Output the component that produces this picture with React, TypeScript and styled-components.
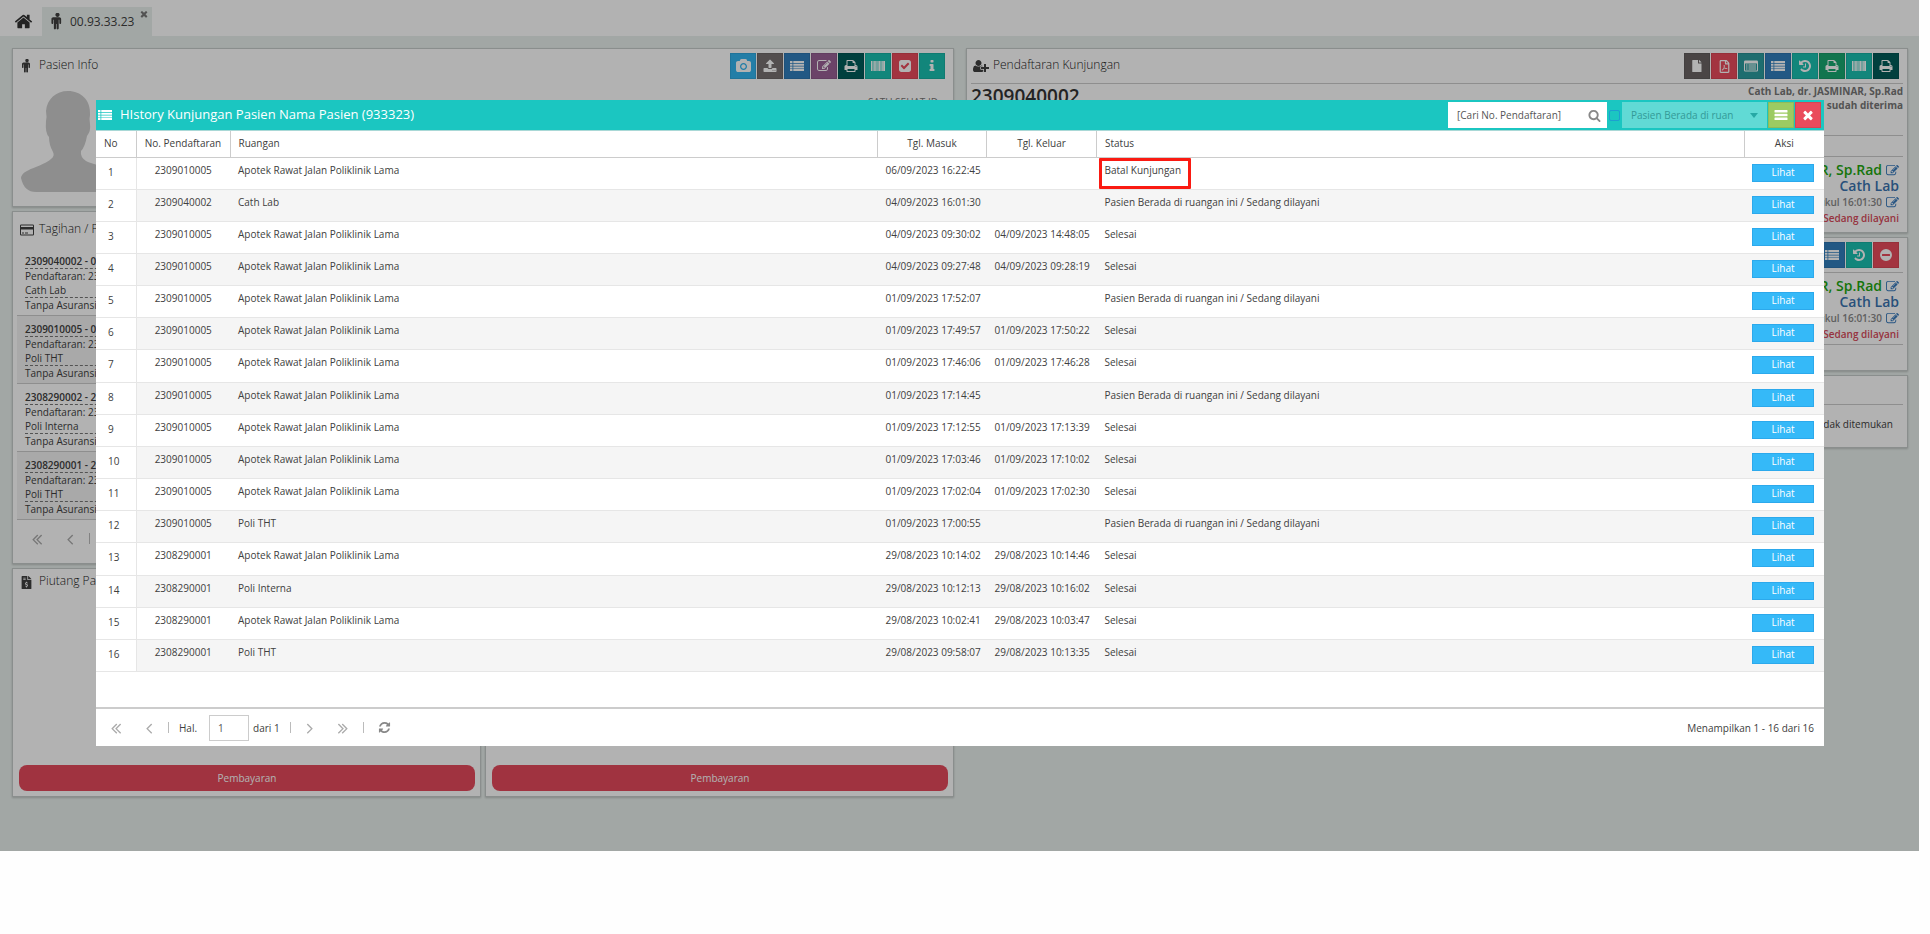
import React from "react";
import styled, { createGlobalStyle } from "styled-components";
import { FaFileInvoiceDollar, FaRegFilePdf } from "react-icons/fa";

const GlobalStyle = createGlobalStyle`
  * { box-sizing: border-box; }
  body { margin: 0; padding-right: 11px; background: #fefefe; }
  body, button, input, select { font-family: "Open Sans", "Noto Sans", sans-serif; }
  h1, h2, h3, p, ul { margin: 0; padding: 0; }
`;

/* ---------- icons ---------- */

const glyphs = {
  home: [1792, "M1472 992v480q0 26-19 45t-45 19h-384v-384h-256v384h-384q-26 0-45-19t-19-45v-480q0-1 .5-3t.5-3l575-474 575 474q1 2 1 6zm223-69l-62 74q-8 9-21 11h-3q-13 0-21-7l-692-577-692 577q-12 8-24 7-13-2-21-11l-62-74q-8-10-7-23.5t11-21.5l719-599q32-26 76-26t76 26l244 204v-195q0-14 9-23t23-9h192q14 0 23 9t9 23v408l219 182q10 8 11 21.5t-7 23.5z"],
  male: [1792, "M1280 640v416q0 40-28 68t-68 28-68-28-28-68v-352h-64v912q0 46-33 79t-79 33-79-33-33-79v-464h-64v464q0 46-33 79t-79 33-79-33-33-79v-912h-64v352q0 40-28 68t-68 28-68-28-28-68v-416q0-80 56-136t136-56h640q80 0 136 56t56 136zm-160-448q0 93-65.5 158.5t-158.5 65.5-158.5-65.5-65.5-158.5 65.5-158.5 158.5-65.5 158.5 65.5 65.5 158.5z"],
  close: [1792, "M1490 1322q0 40-28 68l-136 136q-28 28-68 28t-68-28l-294-294-294 294q-28 28-68 28t-68-28l-136-136q-28-28-28-68t28-68l294-294-294-294q-28-28-28-68t28-68l136-136q28-28 68-28t68 28l294 294 294-294q28-28 68-28t68 28l136 136q28 28 28 68t-28 68l-294 294 294 294q28 28 28 68z"],
  camera: [1920, "M960 672q119 0 203.5 84.5t84.5 203.5-84.5 203.5-203.5 84.5-203.5-84.5-84.5-203.5 84.5-203.5 203.5-84.5zm704-416q106 0 181 75t75 181v896q0 106-75 181t-181 75h-1408q-106 0-181-75t-75-181v-896q0-106 75-181t181-75h224l51-136q19-49 69.5-84.5t103.5-35.5h512q53 0 103.5 35.5t69.5 84.5l51 136h224zm-704 1152q185 0 316.5-131.5t131.5-316.5-131.5-316.5-316.5-131.5-316.5 131.5-131.5 316.5 131.5 316.5 316.5 131.5z"],
  upload: [1792, "M1344 1472q0-26-19-45t-45-19-45 19-19 45 19 45 45 19 45-19 19-45zm256 0q0-26-19-45t-45-19-45 19-19 45 19 45 45 19 45-19 19-45zm128-224v320q0 40-28 68t-68 28h-1472q-40 0-68-28t-28-68v-320q0-40 28-68t68-28h427q21 56 70.5 92t110.5 36h256q61 0 110.5-36t70.5-92h427q40 0 68 28t28 68zm-325-648q-17 40-59 40h-256v448q0 26-19 45t-45 19h-256q-26 0-45-19t-19-45v-448h-256q-42 0-59-40-17-39 14-69l448-448q18-19 45-19t45 19l448 448q31 30 14 69z"],
  edit: [1792, "M888 1184l116-116-152-152-116 116v56h96v96h56zm440-720q-16-16-33 1l-350 350q-17 17-1 33t33-1l350-350q17-17 1-33zm80 594v190q0 119-84.5 203.5t-203.5 84.5h-832q-119 0-203.5-84.5t-84.5-203.5v-832q0-119 84.5-203.5t203.5-84.5h832q63 0 117 25 15 7 18 23 3 17-9 29l-49 49q-14 14-32 8-23-6-45-6h-832q-66 0-113 47t-47 113v832q0 66 47 113t113 47h832q66 0 113-47t47-113v-126q0-13 9-22l64-64q15-15 35-7t20 29zm-96-738l288 288-672 672h-288v-288zm444 132l-92 92-288-288 92-92q28-28 68-28t68 28l152 152q28 28 28 68t-28 68z"],
  print: [1792, "M448 1536h896v-256h-896v256zm0-640h896v-384h-160q-40 0-68-28t-28-68v-160h-640v640zm1152 64q0-26-19-45t-45-19-45 19-19 45 19 45 45 19 45-19 19-45zm128 0v416q0 13-9.5 22.5t-22.5 9.5h-224v160q0 40-28 68t-68 28h-960q-40 0-68-28t-28-68v-160h-224q-13 0-22.5-9.5t-9.5-22.5v-416q0-79 56.5-135.5t135.5-56.5h64v-544q0-40 28-68t68-28h672q40 0 88 20t76 48l152 152q28 28 48 76t20 88v256h64q79 0 135.5 56.5t56.5 135.5z"],
  check: [1792, "M813 1299l614-614q19-19 19-45t-19-45l-102-102q-19-19-45-19t-45 19l-467 467-211-211q-19-19-45-19t-45 19l-102 102q-19 19-19 45t19 45l358 358q19 19 45 19t45-19zm851-883v960q0 119-84.5 203.5t-203.5 84.5h-960q-119 0-203.5-84.5t-84.5-203.5v-960q0-119 84.5-203.5t203.5-84.5h960q119 0 203.5 84.5t84.5 203.5z"],
  info: [1792, "M1216 1344v128q0 26-19 45t-45 19h-512q-26 0-45-19t-19-45v-128q0-26 19-45t45-19h64v-384h-64q-26 0-45-19t-19-45v-128q0-26 19-45t45-19h384q26 0 45 19t19 45v576h64q26 0 45 19t19 45zm-128-1152v192q0 26-19 45t-45 19h-256q-26 0-45-19t-19-45v-192q0-26 19-45t45-19h256q26 0 45 19t19 45z"],
  userPlus: [2048, "M704 896q-159 0-271.5-112.5t-112.5-271.5 112.5-271.5 271.5-112.5 271.5 112.5 112.5 271.5-112.5 271.5-271.5 112.5zm960 128h352q13 0 22.5 9.5t9.5 22.5v192q0 13-9.5 22.5t-22.5 9.5h-352v352q0 13-9.5 22.5t-22.5 9.5h-192q-13 0-22.5-9.5t-9.5-22.5v-352h-352q-13 0-22.5-9.5t-9.5-22.5v-192q0-13 9.5-22.5t22.5-9.5h352v-352q0-13 9.5-22.5t22.5-9.5h192q13 0 22.5 9.5t9.5 22.5v352zm-736 224q0 52 38 90t90 38h256v238q-68 50-171 50h-874q-121 0-194-69t-73-190q0-53 3.5-103.5t14-109 26.5-108.5 43-97.5 62-81 85.5-53.5 111.5-20q19 0 39 17 79 61 154.5 91.5t164.5 30.5 164.5-30.5 154.5-91.5q20-17 39-17 132 0 217 96h-223q-52 0-90 38t-38 90v192z"],
  history: [1792, "M1664 896q0 156-61 298t-164 245-245 164-298 61q-172 0-327-72.5t-264-204.5q-7-10-6.5-22.5t8.5-20.5l137-138q10-9 25-9 16 2 23 12 73 95 179 147t225 52q104 0 198.5-40.5t163.5-109.5 109.5-163.5 40.5-198.5-40.5-198.5-109.5-163.5-163.5-109.5-198.5-40.5q-98 0-188 35.5t-160 101.5l137 138q31 30 14 69-17 40-59 40h-448q-26 0-45-19t-19-45v-448q0-42 40-59 39-17 69 14l130 129q107-101 244.5-156.5t284.5-55.5q156 0 298 61t245 164 164 245 61 298zm-640-288v448q0 14-9 23t-23 9h-320q-14 0-23-9t-9-23v-64q0-14 9-23t23-9h224v-352q0-14 9-23t23-9h64q14 0 23 9t9 23z"],
  search: [1792, "M1216 832q0-185-131.5-316.5t-316.5-131.5-316.5 131.5-131.5 316.5 131.5 316.5 316.5 131.5 316.5-131.5 131.5-316.5zm512 832q0 52-38 90t-90 38q-54 0-90-38l-343-342q-179 124-399 124-143 0-273.5-55.5t-225-150-150-225-55.5-273.5 55.5-273.5 150-225 225-150 273.5-55.5 273.5 55.5 225 150 150 225 55.5 273.5q0 220-124 399l343 343q37 37 37 90z"],
  refresh: [1792, "M1639 1056q0 5-1 7-64 268-268 434.5t-478 166.5q-146 0-282.5-55t-243.5-157l-129 129q-19 19-45 19t-45-19-19-45v-448q0-26 19-45t45-19h448q26 0 45 19t19 45-19 45l-137 137q71 66 161 102t187 36q134 0 250-65t186-179q11-17 53-117 8-23 30-23h192q13 0 22.5 9.5t9.5 22.5zm25-800v448q0 26-19 45t-45 19h-448q-26 0-45-19t-19-45 19-45l138-138q-148-137-349-137-134 0-250 65t-186 179q-11 17-53 117-8 23-30 23h-199q-13 0-22.5-9.5t-9.5-22.5v-7q65-268 270-434.5t480-166.5q146 0 284 55.5t245 156.5l130-129q19-19 45-19t45 19 19 45z"],
  first: [1792, "M1011 1376q0 13-10 23l-50 50q-10 10-23 10t-23-10l-466-466q-10-10-10-23t10-23l466-466q10-10 23-10t23 10l50 50q10 10 10 23t-10 23l-393 393 393 393q10 10 10 23zm384 0q0 13-10 23l-50 50q-10 10-23 10t-23-10l-466-466q-10-10-10-23t10-23l466-466q10-10 23-10t23 10l50 50q10 10 10 23t-10 23l-393 393 393 393q10 10 10 23z"],
  prev: [1792, "M1203 544q0 13-10 23l-393 393 393 393q10 10 10 23t-10 23l-50 50q-10 10-23 10t-23-10l-466-466q-10-10-10-23t10-23l466-466q10-10 23-10t23 10l50 50q10 10 10 23z"],
  file: [1792, "M1024 128v416q0 32 32 32h416v1024q0 64-64 64H352q-64 0-64-64V192q0-64 64-64zM1152 128q32 8 56 32l232 232q24 24 32 56h-320z"],
  list: [1792, "M0 256h320v256H0zM420 256h1372v256H420zM0 600h320v256H0zM420 600h1372v256H420zM0 944h320v256H0zM420 944h1372v256H420zM0 1288h320v256H0zM420 1288h1372v256H420z"],
  bars: [1792, "M128 256h1536q64 0 64 64v192q0 64-64 64H128q-64 0-64-64V320q0-64 64-64zM128 736h1536q64 0 64 64v192q0 64-64 64H128q-64 0-64-64V800q0-64 64-64zM128 1216h1536q64 0 64 64v192q0 64-64 64H128q-64 0-64-64v-192q0-64 64-64z"],
  barcode: [1792, "M0 256h140v1280H0zM200 256h100v1280h-100zM350 256h140v1280H350zM540 256h100v1280h-100zM690 256h140v1280H690zM880 256h100v1280h-100zM1030 256h140v1280h-140zM1220 256h100v1280h-100zM1370 256h140v1280h-140zM1560 256h232v1280h-232z"],
  minus: [1792, "M896 128a768 768 0 1 0 0 1536 768 768 0 1 0 0-1536zM448 768h896q64 0 64 64v128q0 64-64 64H448q-64 0-64-64V832q0-64 64-64z"],
  form: [1792, "M160 192h1472q160 0 160 160v1088q0 160-160 160H160q-160 0-160-160V352q0-160 160-160zM128 576v864q0 32 32 32h1472q32 0 32-32V576zM256 704h192v128H256zM576 704h960v128H576zM256 960h192v128H256zM576 960h960v128H576zM256 1216h192v128H256zM576 1216h960v128H576z"],
  card: [1792, "M160 192h1472q160 0 160 160v1088q0 160-160 160H160q-160 0-160-160V352q0-160 160-160zM128 352v160h1536V352q0-32-32-32H160q-32 0-32 32zM128 832v608q0 32 32 32h1472q32 0 32-32V832zM256 1216h256v128H256zM640 1216h384v128H640z"],
} as const;

type GlyphName = keyof typeof glyphs;

const Svg = styled.svg<{ $flip?: boolean }>`
  display: block;
  flex: none;
  fill: currentColor;
  transform: ${(p) => (p.$flip ? "scaleX(-1)" : "none")};
`;

function Glyph({ name, size = 14, flip }: { name: GlyphName; size?: number; flip?: boolean }) {
  const [w, d] = glyphs[name];
  return (
    <Svg height={size} width={Math.round((size * w) / 1792)} viewBox={`0 0 ${w} 1792`} $flip={flip} aria-hidden="true">
      <path d={d} fillRule="evenodd" />
    </Svg>
  );
}

/* ---------- page behind the dialog ---------- */

const Page = styled.div`
  position: relative;
  min-height: 851px;
  background: #e9f0ed;
  color: #404040;
  font-size: 10px;
  line-height: 14px;
`;

const TabBar = styled.nav`
  display: flex;
  align-items: flex-end;
  height: 36px;
  padding-left: 14px;
  background: #fff;
`;

const HomeLink = styled.a`
  display: flex;
  width: 28px;
  height: 30px;
  align-items: center;
  color: #333;
`;

const PatientTab = styled.div`
  display: flex;
  align-items: center;
  gap: 4px;
  width: 110px;
  height: 29px;
  padding-left: 7px;
  background: #e9f0ed;
  font-size: 12px;
`;

const TabClose = styled.button`
  align-self: flex-start;
  margin: 2px 3px 0 auto;
  padding: 0;
  border: 0;
  background: none;
  color: #777;
`;

const Columns = styled.main`
  display: grid;
  grid-template-columns: 1fr 1fr;
  gap: 12px;
  align-items: start;
  padding: 12px 11px 0 12px;
`;

const Column = styled.div`
  display: flex;
  flex-direction: column;
  gap: 4px;
`;

const SplitRow = styled.div`
  display: grid;
  grid-template-columns: 1fr 1fr;
  gap: 4px;
`;

const Panel = styled.section<{ $height: number }>`
  display: flex;
  flex-direction: column;
  min-height: ${(p) => p.$height}px;
  padding: 0 4px;
  background: #fff;
  border: 1px solid #c6cccb;
  box-shadow: 0 1px 2px rgba(0, 0, 0, 0.2);
`;

const PanelHeader = styled.header<{ $line?: boolean; $height?: number }>`
  display: flex;
  flex: none;
  align-items: center;
  gap: 1px;
  height: ${(p) => p.$height ?? 35}px;
  padding-right: 4px;
  border-bottom: 1px solid ${(p) => (p.$line ? "#ccc" : "transparent")};
`;

const HeaderIcon = styled.span`
  display: flex;
  width: 19px;
  justify-content: center;
  margin-right: 2px;
`;

const PanelTitle = styled.h2`
  flex: 1;
  padding-bottom: 2px;
  color: #222;
  font-size: 12px;
  line-height: 16px;
  font-weight: 300;
`;

const ToolButton = styled.button<{ $color: string }>`
  display: flex;
  align-items: center;
  justify-content: center;
  width: 26px;
  height: 26px;
  padding: 0;
  border: 1px solid rgba(0, 0, 0, 0.08);
  background: ${(p) => p.$color};
  color: #fff;
`;

const PatientBody = styled.div`
  display: flex;
  justify-content: space-between;
  padding: 7px 11px 0 3px;
`;

const SatuSehat = styled.p`
  padding-top: 4px;
  color: #777;
`;

const BillList = styled.ul`
  list-style: none;
`;

const Bill = styled.li`
  padding: 7px 8px 3px;
  border-bottom: 1px solid #ccc;
  line-height: 14px;

  &:nth-child(even) {
    background: #f2f2f2;
  }
`;

const BillHead = styled.h3`
  border-bottom: 1px dashed #777;
  font-size: 10px;
  line-height: 13px;
  font-weight: 600;
`;

const BillRoom = styled.p`
  border-bottom: 1px dashed #777;
`;

const PayButton = styled.button`
  height: 26px;
  margin: auto 1px 5px 2px;
  border: 0;
  border-radius: 8px;
  background: #e54a5c;
  color: #fff;
  font-size: 10px;
`;

const Registration = styled.div`
  display: flex;
  justify-content: space-between;
  height: 52px;
  border-bottom: 1px solid #ccc;
  color: #777;
  font-weight: 700;
  text-align: right;
`;

const RegNumber = styled.h3`
  font-size: 19px;
  line-height: 24px;
  font-weight: 600;
  color: #333;
`;

const Spacer = styled.div`
  height: 21px;
  border-bottom: 1px solid #ccc;
`;

const Visit = styled.div<{ $line?: boolean }>`
  display: flex;
  flex-direction: column;
  align-items: flex-end;
  height: 72px;
  padding: 5px 4px 0 0;
  border-bottom: ${(p) => (p.$line ? "1px solid #ccc" : "0")};
`;

const VisitLine = styled.p<{ $color: string; $big?: boolean }>`
  display: flex;
  align-items: center;
  gap: 4px;
  color: ${(p) => p.$color};
  font-size: ${(p) => (p.$big ? 14 : 10)}px;
  line-height: 16px;
  font-weight: 600;
`;

const EditLink = styled.a`
  color: #3a7bbd;
`;

const Empty = styled.p`
  padding: 12px 10px;
  text-align: right;
`;

const Mask = styled.div`
  position: absolute;
  inset: 0;
  background: rgba(0, 0, 0, 0.3);
`;

/* ---------- dialog ---------- */

const Dialog = styled.section`
  position: absolute;
  top: 100px;
  left: 96px;
  right: 95px;
  display: flex;
  flex-direction: column;
  background: #fff;
`;

const TitleBar = styled.header`
  display: flex;
  align-items: center;
  gap: 1px;
  height: 31px;
  padding: 0 3px 0 2px;
  border-bottom: 1px solid #a9d8d6;
  background: #1bc6c1;
  color: #fff;
`;

const DialogTitle = styled.h1`
  flex: 1;
  padding: 0 0 2px 7px;
  font-size: 13px;
  line-height: 20px;
  font-weight: 500;
`;

const SearchBox = styled.label`
  display: flex;
  align-items: center;
  width: 159px;
  height: 26px;
  padding: 0 6px 0 9px;
  background: #fff;
  color: #888;
`;

const SearchInput = styled.input`
  flex: 1;
  min-width: 0;
  padding: 0;
  border: 0;
  outline: 0;
  background: none;
  font-size: 10px;

  &::placeholder {
    color: #555;
  }
`;

const FilterCheck = styled.input`
  appearance: none;
  width: 11px;
  height: 11px;
  margin: 0 1px;
  border: 1px solid #1d9fd0;
  border-radius: 2px;
`;

const FilterBox = styled.div`
  display: flex;
  align-items: center;
  width: 145px;
  height: 26px;
  padding-right: 9px;
  background: #61dad5;
  color: #27a8a5;
`;

const FilterSelect = styled.select`
  appearance: none;
  flex: 1;
  min-width: 0;
  padding: 0 14px 0 9px;
  border: 0;
  background: none;
  color: #1f7f7d;
  font-size: 10px;
`;

const GridArea = styled.div`
  min-height: 578px;
  border-bottom: 2px solid #ccc;
`;

const Grid = styled.table`
  width: 100%;
  height: 541px;
  table-layout: fixed;
  border-collapse: collapse;
`;

const Col = styled.col<{ $width?: number }>`
  width: ${(p) => (p.$width ? `${p.$width}px` : "auto")};
`;

const Th = styled.th<{ $align?: string }>`
  height: 26px;
  padding: 0 8px 2px;
  border-bottom: 1px solid #ccc;
  border-right: 1px solid #ccc;
  font-weight: 400;
  text-align: ${(p) => p.$align ?? "left"};

  &:last-child {
    border-right: 0;
  }
`;

const Row = styled.tr`
  &:nth-child(even) > td:not(:first-child) {
    background: #f5f5f5;
  }
`;

const Td = styled.td<{ $align?: string }>`
  position: relative;
  height: 32px;
  padding: 5px 8px;
  border-bottom: 1px solid #e6e6e6;
  vertical-align: top;
  white-space: nowrap;
  text-align: ${(p) => p.$align ?? "left"};
`;

const NumberTd = styled(Td)`
  padding: 7px 0 0 12px;
  border-right: 1px solid #e6e6e6;
`;

const ActionTd = styled(Td)`
  padding: 6px 10px 0 8px;
`;

const ViewButton = styled.button`
  display: block;
  width: 100%;
  height: 18px;
  padding: 0 0 2px;
  border: 1px solid #2ca9ec;
  background: #35b9f8;
  color: #fff;
  font-size: 10px;
  line-height: 14px;
  font-weight: 500;
`;

const Highlight = styled.span`
  position: absolute;
  top: 0;
  bottom: 0;
  left: 2px;
  width: 92px;
  border: 3px solid #fa1a12;
  border-radius: 1px;
`;

const Pager = styled.footer<{ $inset?: number }>`
  display: flex;
  align-items: center;
  height: 37px;
  padding: 0 10px 0 ${(p) => p.$inset ?? 11}px;
`;

const PageButton = styled.button`
  display: flex;
  justify-content: center;
  width: 33px;
  padding: 0;
  border: 0;
  background: none;
  color: #aaa;
`;

const FirstButton = styled(PageButton)`
  width: 17px;
  margin-right: 8px;
`;

const RefreshButton = styled(PageButton)`
  width: 14px;
  margin-left: 11px;
  color: #888;
`;

const Divider = styled.span<{ $gap?: number }>`
  width: 1px;
  height: 11px;
  margin: 0 ${(p) => p.$gap ?? 3}px 0 3px;
  background: #bbb;
`;

const PageLabel = styled.label`
  display: flex;
  align-items: center;
  gap: 12px;
`;

const PageInput = styled.input`
  width: 40px;
  height: 26px;
  padding: 0 8px;
  border: 1px solid #ccc;
  color: #555;
  font-size: 10px;
`;

const Total = styled.span`
  margin: 0 7px 0 4px;
`;

const Summary = styled.p`
  margin-left: auto;
`;

/* ---------- data ---------- */

const APOTEK = "Apotek Rawat Jalan Poliklinik Lama";
const SERVED = "Pasien Berada di ruangan ini / Sedang dilayani";
const DONE = "Selesai";

const visits: string[][] = [
  ["2309010005", APOTEK, "06/09/2023 16:22:45", "", "Batal Kunjungan"],
  ["2309040002", "Cath Lab", "04/09/2023 16:01:30", "", SERVED],
  ["2309010005", APOTEK, "04/09/2023 09:30:02", "04/09/2023 14:48:05", DONE],
  ["2309010005", APOTEK, "04/09/2023 09:27:48", "04/09/2023 09:28:19", DONE],
  ["2309010005", APOTEK, "01/09/2023 17:52:07", "", SERVED],
  ["2309010005", APOTEK, "01/09/2023 17:49:57", "01/09/2023 17:50:22", DONE],
  ["2309010005", APOTEK, "01/09/2023 17:46:06", "01/09/2023 17:46:28", DONE],
  ["2309010005", APOTEK, "01/09/2023 17:14:45", "", SERVED],
  ["2309010005", APOTEK, "01/09/2023 17:12:55", "01/09/2023 17:13:39", DONE],
  ["2309010005", APOTEK, "01/09/2023 17:03:46", "01/09/2023 17:10:02", DONE],
  ["2309010005", APOTEK, "01/09/2023 17:02:04", "01/09/2023 17:02:30", DONE],
  ["2309010005", "Poli THT", "01/09/2023 17:00:55", "", SERVED],
  ["2308290001", APOTEK, "29/08/2023 10:14:02", "29/08/2023 10:14:46", DONE],
  ["2308290001", "Poli Interna", "29/08/2023 10:12:13", "29/08/2023 10:16:02", DONE],
  ["2308290001", APOTEK, "29/08/2023 10:02:41", "29/08/2023 10:03:47", DONE],
  ["2308290001", "Poli THT", "29/08/2023 09:58:07", "29/08/2023 10:13:35", DONE],
];

const bills = [
  ["2309040002", "04", "Cath Lab"],
  ["2309010005", "01", "Poli THT"],
  ["2308290002", "29", "Poli Interna"],
  ["2308290001", "29", "Poli THT"],
];

type Tool = { icon: GlyphName | "pdf"; color: string; label: string };

const patientTools: Tool[] = [
  { icon: "camera", color: "#33b5f0", label: "Foto" },
  { icon: "upload", color: "#777070", label: "Unggah" },
  { icon: "list", color: "#317fbe", label: "Riwayat" },
  { icon: "edit", color: "#9a6096", label: "Ubah" },
  { icon: "print", color: "#005c5a", label: "Cetak" },
  { icon: "barcode", color: "#1bc0b0", label: "Barcode" },
  { icon: "check", color: "#ea4b5c", label: "Verifikasi" },
  { icon: "info", color: "#1bc0b0", label: "Info" },
];

const visitTools: Tool[] = [
  { icon: "file", color: "#6a6464", label: "Berkas" },
  { icon: "pdf", color: "#ea4b5c", label: "PDF" },
  { icon: "form", color: "#2c9c9f", label: "Formulir" },
  { icon: "list", color: "#317fbe", label: "Daftar" },
  { icon: "history", color: "#1bc0b0", label: "Riwayat" },
  { icon: "print", color: "#19a870", label: "Cetak" },
  { icon: "barcode", color: "#1bc0b0", label: "Barcode" },
  { icon: "print", color: "#005c5a", label: "Cetak bukti" },
];

const roomTools: Tool[] = [
  { icon: "list", color: "#317fbe", label: "Daftar ruangan" },
  { icon: "history", color: "#1bc0b0", label: "Riwayat ruangan" },
  { icon: "minus", color: "#ea4b5c", label: "Batal" },
];

function Tools({ items }: { items: Tool[] }) {
  return (
    <>
      {items.map((t) => (
        <ToolButton key={t.label} $color={t.color} aria-label={t.label}>
          {t.icon === "pdf" ? <FaRegFilePdf size={13} /> : <Glyph name={t.icon} />}
        </ToolButton>
      ))}
    </>
  );
}

function Avatar() {
  return (
    <svg width="96" height="101" viewBox="0 0 96 101" role="img" aria-label="Foto pasien">
      <path
        fill="#cccccc"
        d="M48 0C61 0 71 9 70 24Q69 28 70 33Q71 40 67 45Q65 56 61 60Q60 66 66 70C76 75 96 76 96 86Q94 101 80 101H16Q4 101 1 87C2 78 22 76 31 68Q35 65 33 61Q29 54 29 46Q25 42 26 30Q27 26 26 20C27 8 36 0 48 0Z"
      />
    </svg>
  );
}

function VisitInfo({ line }: { line?: boolean }) {
  return (
    <Visit $line={line}>
      <VisitLine $color="#22a80f" $big>
        dr. JASMINAR, Sp.Rad
        <EditLink href="#dokter" aria-label="Ubah dokter"><Glyph name="edit" size={13} /></EditLink>
      </VisitLine>
      <VisitLine $color="#3a73b0" $big>Cath Lab</VisitLine>
      <VisitLine $color="#888">
        Pukul 16:01:30
        <EditLink href="#waktu" aria-label="Ubah waktu"><Glyph name="edit" size={13} /></EditLink>
      </VisitLine>
      <VisitLine $color="#d84a5a">Sedang dilayani</VisitLine>
    </Visit>
  );
}

export default function App() {
  return (
    <Page>
      <GlobalStyle />
      <TabBar>
        <HomeLink href="#home" aria-label="Beranda"><Glyph name="home" size={19} /></HomeLink>
        <PatientTab>
          <Glyph name="male" size={17} />
          00.93.33.23
          <TabClose aria-label="Tutup tab"><Glyph name="close" size={10} /></TabClose>
        </PatientTab>
      </TabBar>

      <Columns>
        <Column>
          <Panel $height={159}>
            <PanelHeader>
              <HeaderIcon><Glyph name="male" /></HeaderIcon>
              <PanelTitle>Pasien Info</PanelTitle>
              <Tools items={patientTools} />
            </PanelHeader>
            <PatientBody>
              <Avatar />
              <SatuSehat>SATU SEHAT ID</SatuSehat>
            </PatientBody>
          </Panel>

          <Panel $height={353}>
            <PanelHeader $height={36}>
              <HeaderIcon><Glyph name="card" /></HeaderIcon>
              <PanelTitle>Tagihan / Pembayaran</PanelTitle>
            </PanelHeader>
            <BillList>
              {bills.map(([no, day, room]) => (
                <Bill key={no}>
                  <BillHead>{no} - {day}</BillHead>
                  <p>Pendaftaran: {no}</p>
                  <BillRoom>{room}</BillRoom>
                  <p>Tanpa Asuransi</p>
                </Bill>
              ))}
            </BillList>
            <Pager>
              <FirstButton aria-label="Awal"><Glyph name="first" size={18} /></FirstButton>
              <PageButton aria-label="Sebelum"><Glyph name="prev" size={18} /></PageButton>
              <Divider />
            </Pager>
          </Panel>

          <SplitRow>
            <Panel $height={229}>
              <PanelHeader $height={27}>
                <HeaderIcon><FaFileInvoiceDollar size={13} /></HeaderIcon>
                <PanelTitle>Piutang Pasien</PanelTitle>
              </PanelHeader>
              <PayButton>Pembayaran</PayButton>
            </Panel>
            <Panel $height={229}>
              <PayButton>Pembayaran</PayButton>
            </Panel>
          </SplitRow>
        </Column>

        <Column>
          <Panel $height={185}>
            <PanelHeader $line>
              <HeaderIcon><Glyph name="userPlus" /></HeaderIcon>
              <PanelTitle>Pendaftaran Kunjungan</PanelTitle>
              <Tools items={visitTools} />
            </PanelHeader>
            <Registration>
              <RegNumber>2309040002</RegNumber>
              <div>
                <p>Cath Lab, dr. JASMINAR, Sp.Rad</p>
                <p>sudah diterima</p>
              </div>
            </Registration>
            <Spacer />
            <VisitInfo />
          </Panel>
          <Panel $height={134}>
            <PanelHeader $line>
              <PanelTitle>Kunjungan</PanelTitle>
              <Tools items={roomTools} />
            </PanelHeader>
            <VisitInfo line />
          </Panel>
          <Panel $height={73}>
            <PanelHeader $line $height={29} />
            <Empty>Data tidak ditemukan</Empty>
          </Panel>
        </Column>
      </Columns>

      <Mask />

      <Dialog role="dialog" aria-labelledby="history-title">
        <TitleBar>
          <Glyph name="list" />
          <DialogTitle id="history-title">HIstory Kunjungan Pasien Nama Pasien (933323)</DialogTitle>
          <SearchBox>
            <SearchInput placeholder="[Cari No. Pendaftaran]" aria-label="Cari No. Pendaftaran" />
            <Glyph name="search" size={13} />
          </SearchBox>
          <FilterCheck type="checkbox" aria-label="Aktifkan filter status" />
          <FilterBox>
            <FilterSelect aria-label="Status kunjungan" disabled>
              <option>Pasien Berada di ruan</option>
            </FilterSelect>
            <Svg width="8" height="5" viewBox="0 0 8 5" aria-hidden="true"><path d="M0 0h8L4 5z" /></Svg>
          </FilterBox>
          <ToolButton $color="#9ccb62" aria-label="Menu"><Glyph name="bars" /></ToolButton>
          <ToolButton $color="#ea4b5c" aria-label="Tutup"><Glyph name="close" /></ToolButton>
        </TitleBar>

        <GridArea>
          <Grid>
            <colgroup>
              <Col $width={40} />
              <Col $width={94} />
              <Col />
              <Col $width={109} />
              <Col $width={110} />
              <Col />
              <Col $width={80} />
            </colgroup>
            <thead>
              <tr>
                <Th>No</Th>
                <Th $align="center">No. Pendaftaran</Th>
                <Th>Ruangan</Th>
                <Th $align="center">Tgl. Masuk</Th>
                <Th $align="center">Tgl. Keluar</Th>
                <Th>Status</Th>
                <Th $align="center">Aksi</Th>
              </tr>
            </thead>
            <tbody>
              {visits.map(([no, room, start, end, status], i) => (
                <Row key={start}>
                  <NumberTd>{i + 1}</NumberTd>
                  <Td $align="center">{no}</Td>
                  <Td>{room}</Td>
                  <Td $align="center">{start}</Td>
                  <Td $align="center">{end}</Td>
                  <Td>
                    {status}
                    {i === 0 && <Highlight />}
                  </Td>
                  <ActionTd><ViewButton>Lihat</ViewButton></ActionTd>
                </Row>
              ))}
            </tbody>
          </Grid>
        </GridArea>

        <Pager>
          <FirstButton aria-label="Halaman pertama"><Glyph name="first" size={18} /></FirstButton>
          <PageButton aria-label="Halaman sebelumnya"><Glyph name="prev" size={18} /></PageButton>
          <Divider $gap={10} />
          <PageLabel>
            Hal.
            <PageInput defaultValue="1" />
          </PageLabel>
          <Total>dari 1</Total>
          <Divider />
          <PageButton aria-label="Halaman berikutnya"><Glyph name="prev" size={18} flip /></PageButton>
          <PageButton aria-label="Halaman terakhir"><Glyph name="first" size={18} flip /></PageButton>
          <Divider />
          <RefreshButton aria-label="Muat ulang"><Glyph name="refresh" size={13} /></RefreshButton>
          <Summary>Menampilkan 1 - 16 dari 16</Summary>
        </Pager>
      </Dialog>
    </Page>
  );
}
